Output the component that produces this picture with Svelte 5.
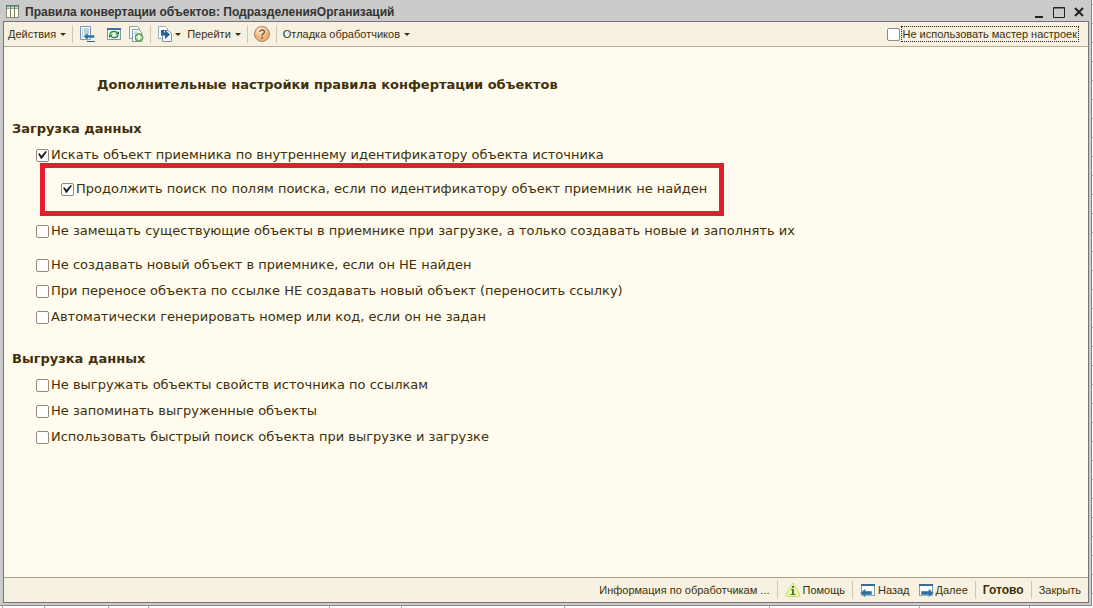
<script lang="ts">
  let skipWizard = $state(false);

  let importOptions = $state([
    { text: 'Искать объект приемника по внутреннему идентификатору объекта источника', checked: true },
    {
      text: 'Продолжить поиск по полям поиска, если по идентификатору объект приемник не найден',
      checked: true,
      kind: 'marked',
    },
    {
      text: 'Не замещать существующие объекты в приемнике при загрузке, а только создавать новые и заполнять их',
      checked: false,
    },
    { text: 'Не создавать новый объект в приемнике, если он НЕ найден', checked: false, kind: 'apart' },
    { text: 'При переносе объекта по ссылке НЕ создавать новый объект (переносить ссылку)', checked: false },
    { text: 'Автоматически генерировать номер или код, если он не задан', checked: false },
  ]);

  let exportOptions = $state([
    { text: 'Не выгружать объекты свойств источника по ссылкам', checked: false },
    { text: 'Не запоминать выгруженные объекты', checked: false },
    { text: 'Использовать быстрый поиск объекта при выгрузке и загрузке', checked: false },
  ]);

  // column widths of the table that lies behind the window
  const columns = [39, 61, 37, 172, 68, 155, 196, 142, 105, 60];
</script>

<div class="screen">
  <div class="window">
    <header class="titlebar">
      <svg width="13" height="13" viewBox="0 0 13 13">
        <rect x="0.5" y="0.5" width="12" height="12" fill="#fffef0" stroke="#8a8a72" />
        <rect x="0" y="0" width="13" height="4" fill="#4f7d80" />
        <path d="M1 2.500h3M5 2.500h3M9 2.500h3" stroke="#e6dc7a" stroke-width="2" />
        <path d="M4.500 3v10M8.500 3v10" stroke="#7d7d68" />
      </svg>
      <h1>Правила конвертации объектов: ПодразделенияОрганизаций</h1>
      <button class="win-btn" aria-label="Свернуть">
        <svg width="12" height="12" viewBox="0 0 12 12"><path d="M2 11h8" stroke="#222" stroke-width="2" /></svg>
      </button>
      <button class="win-btn" aria-label="Развернуть">
        <svg width="12" height="12" viewBox="0 0 12 12">
          <path d="M0.500 1.500h11v10h-11zM0 2h12" fill="none" stroke="#222" />
        </svg>
      </button>
      <button class="win-btn" aria-label="Закрыть окно">
        <svg width="12" height="12" viewBox="0 0 12 12">
          <path d="M2 2l8 8M10 2l-8 8" stroke="#222" stroke-width="2" />
        </svg>
      </button>
    </header>

    <div class="frame">
      <div class="toolbar">
        <button class="menu">Действия <i class="caret"></i></button>
        <span class="sep"></span>
        <button aria-label="Записать">
          <svg width="16" height="16" viewBox="0 0 16 16">
            <path d="M1.500 0.500h10v13h-10z" fill="#fafcff" stroke="#7897b5" />
            <path d="M3 3h1M5 3h5M3 5h1M5 5h5M3 7h1M5 7h5M3 9h1M5 9h2M3 11h1" stroke="#7f9fbd" />
            <path d="M4.500 10.500l4.500-4v2.500h6.500v3H9v2.500z" fill="#2e73a6" stroke="#e5f0f7" stroke-width="0.500" />
            <path d="M8 15.500h8" stroke="#2c5e85" />
          </svg>
        </button>
        <button class="wide" aria-label="Обновить">
          <svg width="16" height="16" viewBox="0 0 16 16">
            <path d="M1.500 2.500h13v11h-13z" fill="#f4fbf3" stroke="#7695a8" />
            <path d="M1 3h14" stroke="#3f7194" stroke-width="2" />
            <path d="M4 8a4 3 0 0 1 7-1.500M12 9a4 3 0 0 1-7 1.500" fill="none" stroke="#2e8c45" stroke-width="1.500" />
            <path d="M9 8.500h4V5zM7 8.500H3V12z" fill="#217a38" />
          </svg>
        </button>
        <button aria-label="Скопировать">
          <svg width="16" height="16" viewBox="0 0 16 16">
            <path d="M1.500 0.500h8l2 2v10h-10z" fill="#f4f8f3" stroke="#8ca39a" />
            <path d="M4.500 3.500h6l3 3v9h-9z" fill="#fff" stroke="#8199a5" />
            <path d="M6 6h4M6 8h3" stroke="#a9bdc5" />
            <circle cx="11" cy="11.500" r="4" fill="#83bd70" stroke="#55964d" />
            <path d="M8.500 11.500h5M11 9v5" stroke="#fff" stroke-width="2" />
          </svg>
        </button>
        <span class="sep"></span>
        <button class="drop">
          <svg width="16" height="16" viewBox="0 0 16 16">
            <path d="M1.500 0.500h7l2 2v10h-9z" fill="#fff" stroke="#9badbd" />
            <path d="M5.500 4.500h6l3 3v8h-9z" fill="#f3f8fc" stroke="#7898b5" />
            <path d="M4 4v5.500h4V13l5-4.500L8 4v2.500H7V4z" fill="#275f94" />
          </svg>
          <i class="caret"></i>
        </button>
        <button class="menu">Перейти <i class="caret"></i></button>
        <span class="sep"></span>
        <button aria-label="Справка">
          <svg width="16" height="16" viewBox="0 0 16 16">
            <defs>
              <radialGradient id="ball" cx="40%" cy="25%">
                <stop offset="0" stop-color="#fff6df" />
                <stop offset="1" stop-color="#edb27b" />
              </radialGradient>
            </defs>
            <circle cx="8" cy="8" r="7.500" fill="url(#ball)" stroke="#ae8060" />
            <path d="M5.800 6a2.300 2 0 1 1 3.700 1.500Q8 8.500 8 9.700" fill="none" stroke="#71492a" stroke-width="1.300" />
            <path d="M7.300 11h1.400v1.500H7.300z" fill="#71492a" />
          </svg>
        </button>
        <span class="sep"></span>
        <button class="menu">Отладка обработчиков <i class="caret"></i></button>
        <label class="wizard">
          <input type="checkbox" bind:checked={skipWizard} />
          <span>Не использовать мастер настроек</span>
        </label>
      </div>

      <main>
        <h2>Дополнительные настройки правила конфертации объектов</h2>

        <h3>Загрузка данных</h3>
        {#each importOptions as option}
          <label class="option {option.kind}">
            <input type="checkbox" bind:checked={option.checked} />
            <span>{option.text}</span>
          </label>
        {/each}

        <h3 class="second">Выгрузка данных</h3>
        {#each exportOptions as option}
          <label class="option">
            <input type="checkbox" bind:checked={option.checked} />
            <span>{option.text}</span>
          </label>
        {/each}
      </main>

      <footer class="toolbar bottom">
        <button>Информация по обработчикам ...</button>
        <span class="sep"></span>
        <button>
          <svg width="16" height="16" viewBox="0 0 16 16">
            <path d="M8 1.500Q9 1.500 10 4l4.500 8q1 2.500-1 2.500h-11q-2 0-1-2.500L6 4q1-2.500 2-2.500z" fill="#eef8a8" stroke="#c5dd66" />
            <path d="M7 4h2v2H7zM6 7h3v5h1.500v1h-5v-1H7V8H6z" fill="#4c7552" />
          </svg>
          Помощь
        </button>
        <span class="sep"></span>
        <button>
          <svg width="16" height="16" viewBox="0 0 16 16">
            <path d="M1.500 2.500h13v11h-13z" fill="#fff" stroke="#7c9db4" />
            <path d="M1 3h14" stroke="#356b94" stroke-width="2" />
            <path d="M0 11l5.500-4.500V9H12v4H5.500v2.500z" fill="#2d719e" stroke="#e5f0f7" stroke-width="0.500" />
          </svg>
          Назад
        </button>
        <button>
          <svg width="16" height="16" viewBox="0 0 16 16">
            <path d="M1.500 2.500h13v11h-13z" fill="#fff" stroke="#7c9db4" />
            <path d="M1 3h14" stroke="#356b94" stroke-width="2" />
            <path d="M16 11l-5.500-4.500V9H3v4h7.500v2.500z" fill="#2d719e" stroke="#e5f0f7" stroke-width="0.500" />
          </svg>
          Далее
        </button>
        <span class="sep"></span>
        <button class="primary">Готово</button>
        <span class="sep"></span>
        <button>Закрыть</button>
      </footer>
    </div>
  </div>

  <div class="behind">
    {#each columns as column}
      <span style:flex-grow={column}></span>
    {/each}
  </div>
</div>

<style>
  :global(body) {
    margin: 0;
  }

  .screen {
    box-sizing: border-box;
    display: flex;
    flex-direction: column;
    min-height: 100vh;
    background: repeating-linear-gradient(#fff 0 18px, #aaa 18px 19px) 0 5px;
    color: #40300a;
    font-family: 'Liberation Sans', Arial, sans-serif;
    font-size: 11px;
  }

  .window {
    display: flex;
    flex: 1;
    flex-direction: column;
    margin-right: 1px;
    padding: 0 2px 2px 3px;
    border-right: 1px solid #88837e;
    border-bottom: 1px solid #8b8787;
    background: #cbcbcb;
  }

  .behind {
    display: flex;
    height: 2px;
    padding-left: 2px;
    background: #fff;
  }

  .behind span {
    border-left: 1px solid #aaa;
  }

  .titlebar {
    box-sizing: border-box;
    display: flex;
    align-items: center;
    gap: 6px;
    height: 21px;
    padding: 2px 3px 0;
  }

  h1 {
    flex: 1;
    margin: 0;
    color: #333;
    font-size: 12px;
    line-height: 16px;
  }

  button {
    display: flex;
    align-items: center;
    gap: 2px;
    padding: 0 4px;
    border: 0;
    background: none;
    color: inherit;
    font: inherit;
    white-space: nowrap;
  }

  svg {
    display: block;
    flex: none;
  }

  .win-btn {
    padding: 0 1px;
  }

  .frame {
    display: flex;
    flex: 1;
    flex-direction: column;
    border: 1px solid #77736f;
    background: #fffbee;
  }

  .toolbar {
    display: flex;
    align-items: center;
    height: 24px;
    border-bottom: 1px solid #b5ab8e;
    background: #f6f1e0;
  }

  .sep {
    width: 1px;
    height: 18px;
    margin: 0 2px;
    background: #cfc8b0;
  }

  .caret {
    border: 3px solid transparent;
    border-top-color: #40300a;
    border-bottom: 0;
  }

  .menu {
    gap: 4px;
  }

  .drop {
    padding-right: 2px;
  }

  .wide {
    padding: 0 2px 0 7px;
  }

  .bottom {
    justify-content: flex-end;
    padding-right: 3px;
    border-top: 1px solid #aca286;
    border-bottom: 0;
  }

  .bottom .sep {
    margin: 0 3px;
  }

  .primary {
    font-size: 12px;
    font-weight: bold;
  }

  .wizard {
    display: flex;
    align-items: center;
    gap: 2px;
    margin-left: auto;
    padding-right: 10px;
  }

  .wizard span {
    padding: 0 1px;
    outline: 1px dotted #222;
    line-height: 14px;
  }

  input {
    box-sizing: border-box;
    flex: none;
    width: 13px;
    height: 13px;
    margin: 0;
    border: 1px solid #928b7a;
    border-radius: 2px;
    appearance: none;
    background: #fff;
  }

  input:checked::before {
    display: block;
    width: 9px;
    height: 9px;
    margin: 1px;
    background: #222;
    clip-path: polygon(0 35%, 18% 30%, 38% 58%, 85% 5%, 100% 15%, 42% 95%, 30% 90%);
    content: '';
  }

  main {
    flex: 1;
    padding: 29px 8px;
    font-family: Verdana, 'DejaVu Sans', sans-serif;
    font-size: 13px;
    line-height: 18px;
  }

  h2,
  h3 {
    margin: 0;
    font-size: 13px;
  }

  h2 {
    margin: 0 0 26px 85px;
  }

  .second {
    margin-top: 24px;
  }

  .option {
    display: flex;
    align-items: center;
    gap: 2px;
    margin: 8px 0 0 24px;
  }

  .marked {
    width: fit-content;
    margin: -1px 0 -2px 28px;
    padding: 12px 12px 13px 16px;
    border: 5px solid #df202c;
  }

  .apart {
    margin-top: 16px;
  }
</style>
